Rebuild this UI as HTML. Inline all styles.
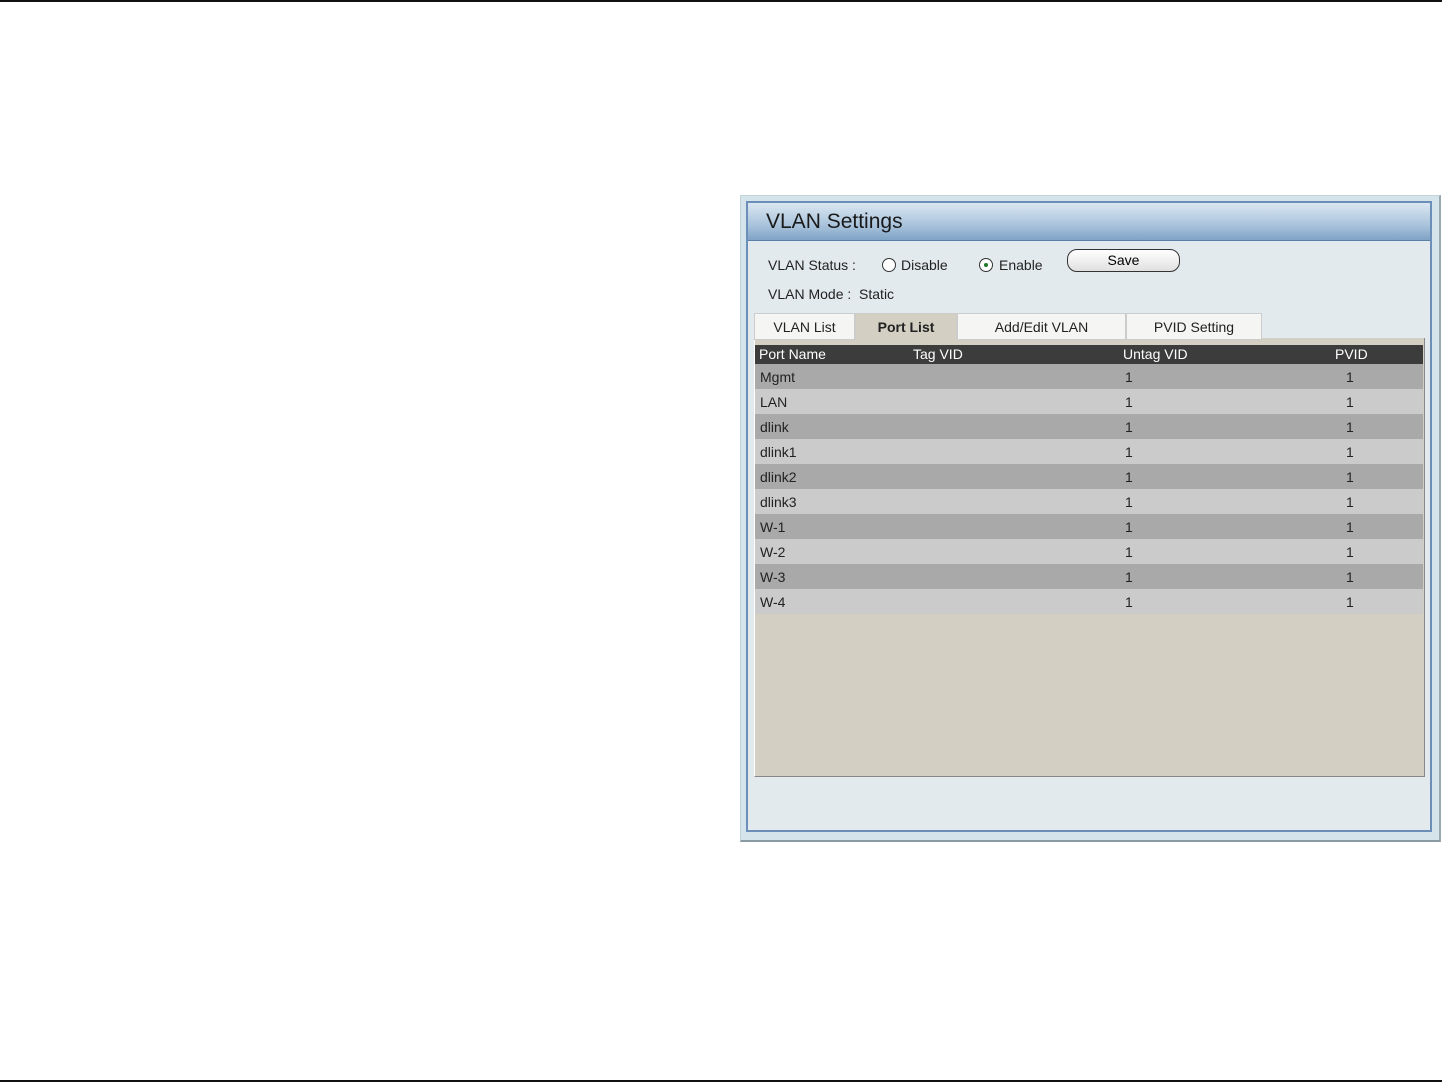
<!DOCTYPE html>
<html><head><style>
body{margin:0;width:1442px;height:1083px;background:#fff;position:relative;font-family:"Liberation Sans",sans-serif;overflow:hidden}
.a{position:absolute}
.t{font-size:14px;color:#222}
</style></head><body>
<div class="a" style="left:0;top:0;width:1442px;height:2px;background:#111"></div>
<div class="a" style="left:0;top:1080px;width:1442px;height:2px;background:#111"></div>
<div class="a" style="left:740px;top:195px;width:698px;height:644px;background:#d5e3ea;border:1px solid #c3d3dc;border-bottom:2px solid #8a9aa4;border-right:2px solid #9aa8b0"></div>
<div class="a" style="left:746px;top:201px;width:682px;height:627px;background:#e3eaed;border:2px solid #6b8fb8"></div>
<div class="a" style="left:748px;top:203px;width:682px;height:37px;background:linear-gradient(#dbe7f1,#a9c3dc 60%,#7fa3c6);border-bottom:1px solid #5a80a8"></div>
<div class="a" style="left:766px;top:210px;font-size:21px;color:#1a1a1a">VLAN Settings</div>
<div class="a t" style="left:768px;top:257px">VLAN Status :</div>
<div class="a" style="left:882px;top:258px;width:12px;height:12px;border:1px solid #333;border-radius:50%;background:#fff"></div>
<div class="a t" style="left:901px;top:257px">Disable</div>
<div class="a" style="left:979px;top:258px;width:12px;height:12px;border:1px solid #333;border-radius:50%;background:#fff"></div>
<div class="a" style="left:984px;top:263px;width:4px;height:4px;border-radius:50%;background:#1a7a2a"></div>
<div class="a t" style="left:999px;top:257px">Enable</div>
<div class="a" style="left:1067px;top:249px;width:111px;height:21px;border:1px solid #333;border-radius:10px;background:linear-gradient(#fff,#e0e0e0);font-size:14px;text-align:center;line-height:21px">Save</div>
<div class="a t" style="left:768px;top:286px">VLAN Mode :&nbsp;&nbsp;Static</div>
<div class="a" style="left:754px;top:338px;width:669px;height:438px;background:#d3d0c3;border-right:1px solid #888;border-bottom:1px solid #888;border-left:1px solid #fff"></div>
<div class="a t" style="left:754px;top:313px;width:99px;height:25px;background:#f5f5f3;border:1px solid #ccc;text-align:center;line-height:26px">VLAN List</div>
<div class="a t" style="left:855px;top:313px;width:100px;height:26px;background:#d3d0c3;border:1px solid #ccc;border-bottom:none;text-align:center;line-height:26px;font-weight:bold">Port List</div>
<div class="a t" style="left:957px;top:313px;width:167px;height:25px;background:#f5f5f3;border:1px solid #ccc;text-align:center;line-height:26px">Add/Edit VLAN</div>
<div class="a t" style="left:1126px;top:313px;width:134px;height:25px;background:#f5f5f3;border:1px solid #ccc;text-align:center;line-height:26px">PVID Setting</div>
<div class="a" style="left:755px;top:345px;width:668px;height:19px;background:#3c3c3c;color:#fff;font-size:14px;line-height:19px">
<span class="a" style="left:4px">Port Name</span><span class="a" style="left:158px">Tag VID</span><span class="a" style="left:368px">Untag VID</span><span class="a" style="left:580px">PVID</span></div>
<div id="rows"></div>
<script>
var n=["Mgmt","LAN","dlink","dlink1","dlink2","dlink3","W-1","W-2","W-3","W-4"],h="";
n.forEach(function(s,i){h+='<div class="a t" style="left:755px;top:'+(364+i*25)+'px;width:668px;height:25px;line-height:26px;background:'+(i%2?'#cbcbcb':'#a9a9a9')+'"><span class="a" style="left:5px">'+s+'</span><span class="a" style="left:370px">1</span><span class="a" style="left:591px">1</span></div>'});
document.getElementById("rows").innerHTML=h;
</script>
</body></html>
